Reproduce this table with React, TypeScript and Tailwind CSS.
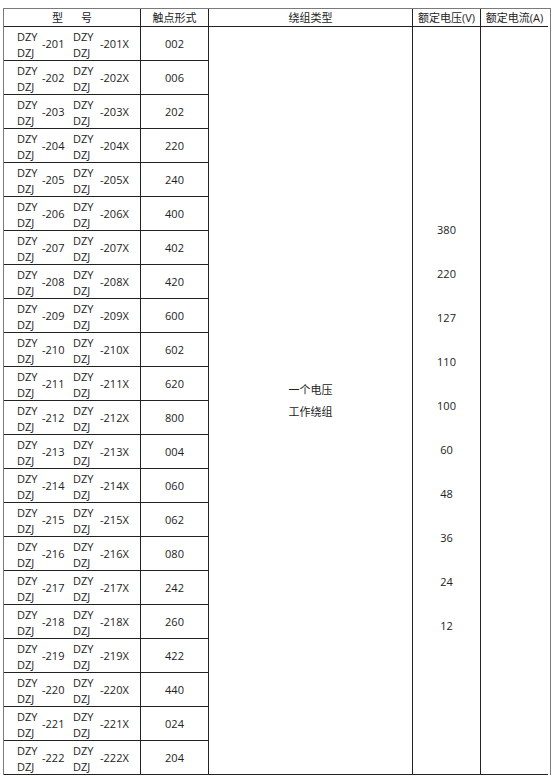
import React from "react";

const rows = [
  ["201", "002"],
  ["202", "006"],
  ["203", "202"],
  ["204", "220"],
  ["205", "240"],
  ["206", "400"],
  ["207", "402"],
  ["208", "420"],
  ["209", "600"],
  ["210", "602"],
  ["211", "620"],
  ["212", "800"],
  ["213", "004"],
  ["214", "060"],
  ["215", "062"],
  ["216", "080"],
  ["217", "242"],
  ["218", "260"],
  ["219", "422"],
  ["220", "440"],
  ["221", "024"],
  ["222", "204"],
];

const volts = ["380", "220", "127", "110", "100", "60", "48", "36", "24", "12"];

export default function App() {
  return (
    <div
      className="w-[554px] h-[780px] bg-white pt-[8px] pl-[3px] text-[#222] text-[11px]"
      style={{ fontFamily: '"Open Sans", "Noto Sans CJK SC", sans-serif' }}
    >
      <div className="grid w-[546px] grid-cols-[137px_68px_204px_68px_67px] grid-rows-[18px_repeat(22,34px)] border-l border-t border-r border-[#7a7a7a] box-content">
        <div className="border-r border-b border-[#222] flex items-center justify-center leading-none">
          型<span className="inline-block w-[18px]" />号
        </div>
        <div className="border-r border-b border-[#222] flex items-center justify-center leading-none">触点形式</div>
        <div className="border-r border-b border-[#222] flex items-center justify-center leading-none">绕组类型</div>
        <div className="border-r border-b border-[#222] flex items-center justify-center leading-none">额定电压(V)</div>
        <div className="border-b border-[#222] flex items-center justify-center leading-none">额定电流(A)</div>

        {rows.map(([n, c]) => (
          <React.Fragment key={n}>
            <div className="col-start-1 border-r border-b border-[#222] flex items-center pl-[13px] pt-[2px]">
              <div className="w-[25px] flex flex-col leading-[16px]">
                <span>DZY</span>
                <span>DZJ</span>
              </div>
              <div className="w-[31px]">-{n}</div>
              <div className="w-[27px] flex flex-col leading-[16px]">
                <span>DZY</span>
                <span>DZJ</span>
              </div>
              <div>-{n}X</div>
            </div>
            <div className="col-start-2 border-r border-b border-[#222] flex items-center justify-center pt-[1px]">{c}</div>
          </React.Fragment>
        ))}

        <div className="col-start-3 row-start-2 row-[span_22/span_22] border-r border-b border-[#222] flex flex-col items-center justify-center leading-[22px]">
          <span>一个电压</span>
          <span>工作绕组</span>
        </div>
        <div className="col-start-4 row-start-2 row-[span_22/span_22] border-r border-b border-[#222] flex flex-col items-center pt-[181px]">
          {volts.map((v) => (
            <div key={v} className="h-[44px] leading-[44px]">{v}</div>
          ))}
        </div>
        <div className="col-start-5 row-start-2 row-[span_22/span_22] border-b border-[#222]" />
      </div>
    </div>
  );
}
